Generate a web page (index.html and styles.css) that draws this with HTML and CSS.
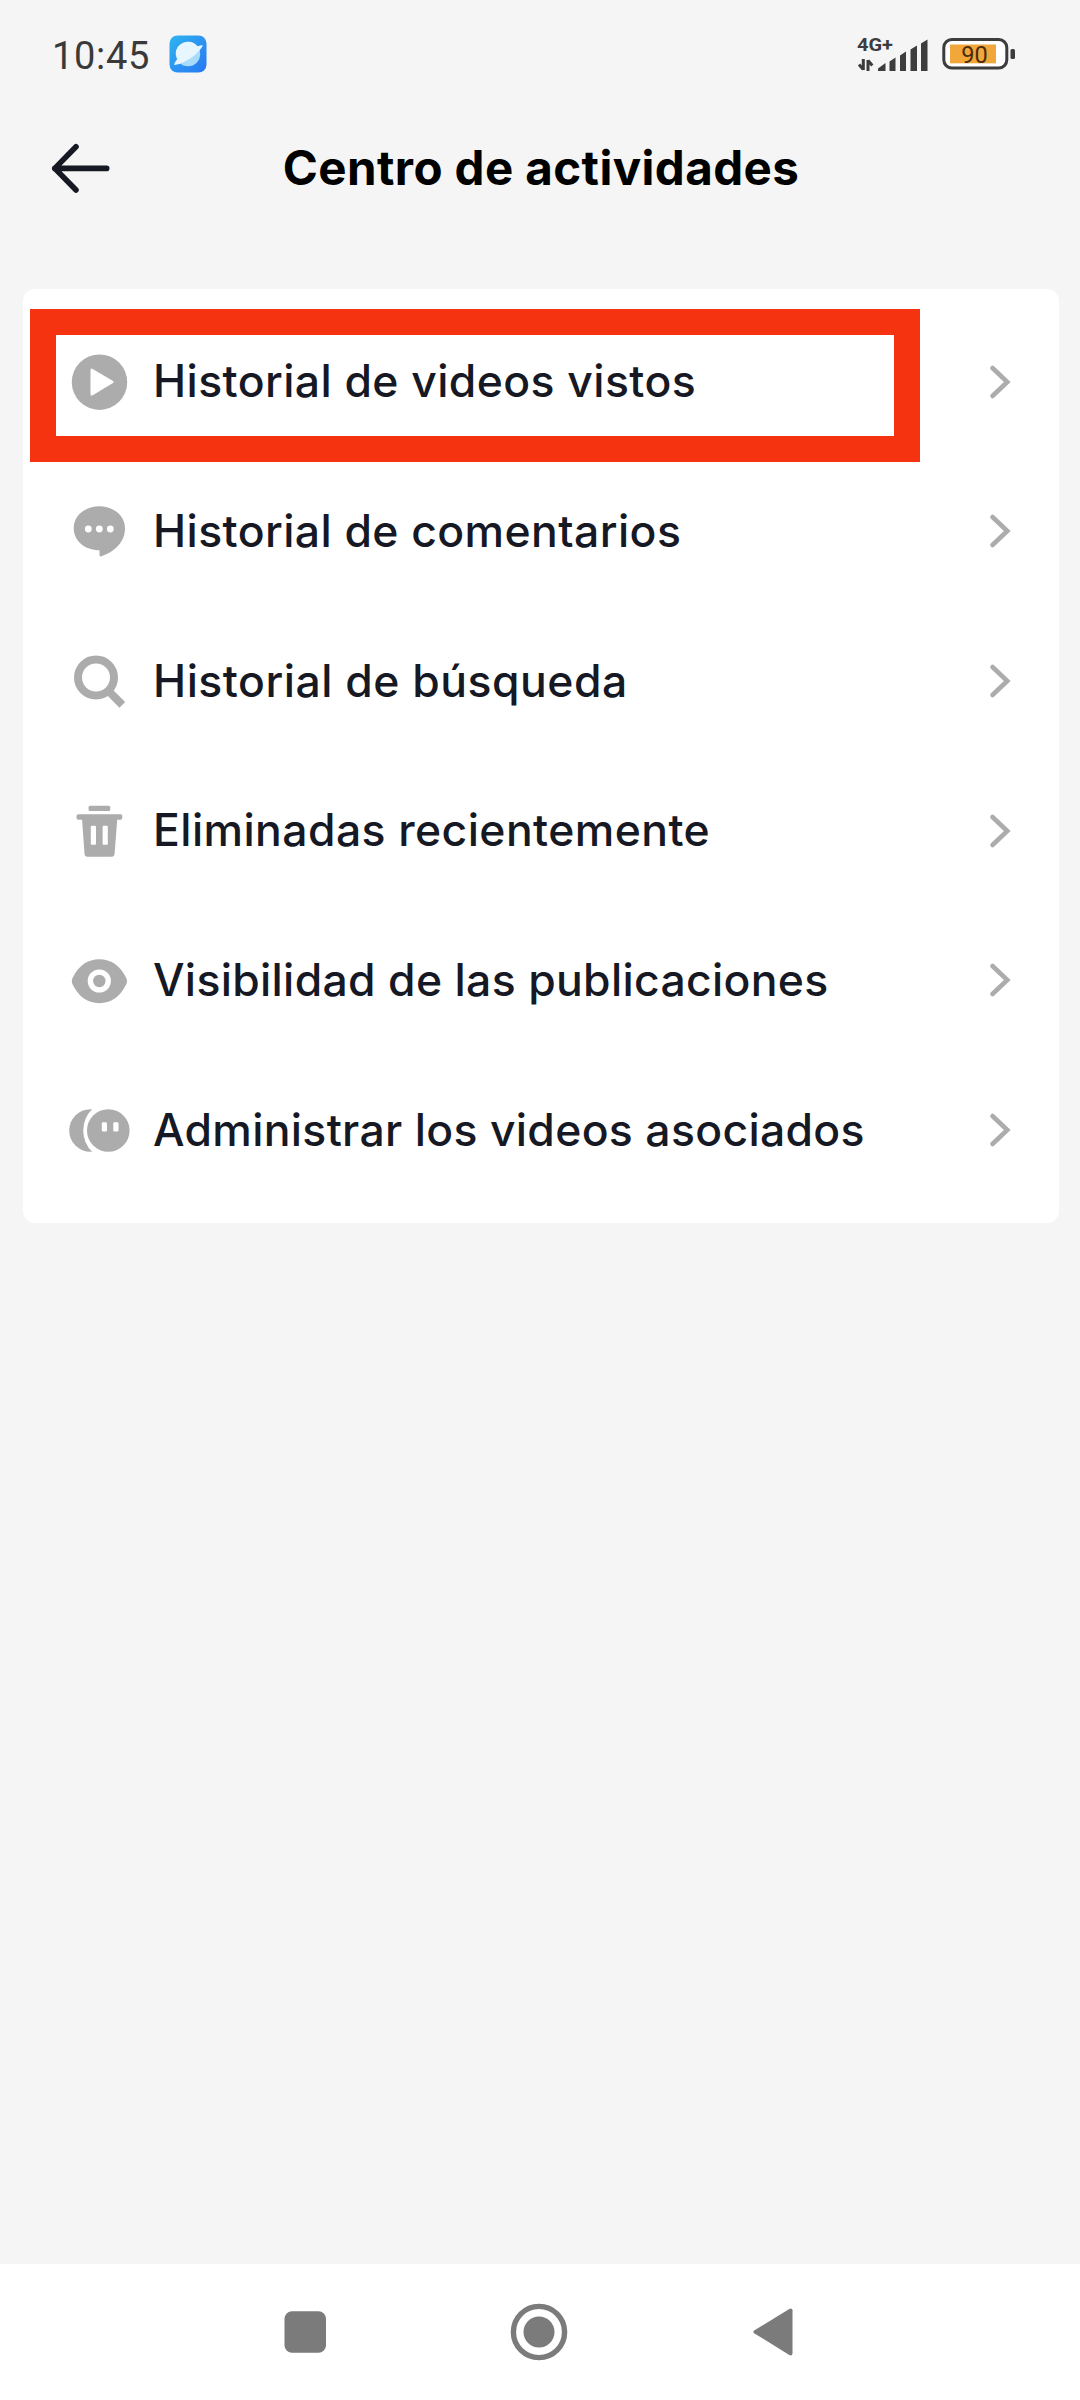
FILE: index.html
```html
<!DOCTYPE html>
<html lang="es">
<head>
<meta charset="utf-8">
<title>Centro de actividades</title>
<link rel="stylesheet" href="styles.css">
</head>
<body>
<div class="screen">
  <div class="status-bar">
    <span class="clock">10:45</span>
    <svg class="app-icon" width="38" height="38" viewBox="0 0 38 38">
      <defs>
        <linearGradient id="sky" x1="0" y1="0" x2="1" y2="1">
          <stop offset="0" stop-color="#2fb4f0"/><stop offset="1" stop-color="#2877f3"/>
        </linearGradient>
      </defs>
      <rect x=".5" y=".5" width="37" height="37" rx="8" fill="url(#sky)"/>
      <circle cx="19" cy="19" r="12.2" fill="#a9dcfb"/>
      <path d="M6.8 19.6a12.2 12.2 0 0 1 21.4-8.4L33.5 10c.5 1.3-1.500 4-4.500 7C23 23.400 12 29.500 5.500 30c-.8-.8.7-3.400 3.300-6.500a12 12 0 0 1-2-3.900Z" fill="#e8f7ff"/>
    </svg>
    <svg class="signal" width="74" height="40" viewBox="0 0 74 40">
      <text class="network" x="0" y="17" textLength="36" lengthAdjust="spacingAndGlyphs">4G+</text>
      <path class="traffic" d="M6.300 25v11M6.300 35.500 2 30.500M11 37V26M11 26.500l4.300 5"/>
      <path class="bars" d="M21 34.500 28.500 29v8H21ZM32.500 27.500l6-4V37h-6ZM43 21.500l6-4V37h-6ZM53.500 15.500l6.500-4V37h-6.500ZM64 9.500l6.500-4V37H64Z"/>
    </svg>
    <svg class="battery" width="75" height="34" viewBox="0 0 75 34">
      <rect x="2.800" y="2.500" width="63" height="28.500" rx="8" fill="#fff" stroke="#3d3d3d" stroke-width="3"/>
      <rect x="9" y="7.500" width="46" height="18.800" fill="#f2a73b"/>
      <rect x="69.500" y="12" width="4.500" height="10" rx="1.500" fill="#3d3d3d"/>
      <text class="charge" x="33.500" y="25.500" text-anchor="middle">90</text>
    </svg>
  </div>

  <header class="header">
    <svg class="back" width="64" height="56" viewBox="0 0 64 56">
      <path d="M30 6.800 8.800 28.400 30 50M8.800 28.400h51.900"/>
    </svg>
    <h1 class="title">Centro de actividades</h1>
  </header>

  <main class="card">
    <div class="row">
      <svg class="icon" viewBox="0 0 64 60">
        <circle cx="31.500" cy="30.200" r="27.700"/>
        <path class="cut" d="M22.500 18.200q0-2.600 2.200-1.300l20.300 12q1.500 1.100 0 2.200l-20.300 12.200q-2.200 1.300-2.200-1.300Z"/>
      </svg>
      <span class="label">Historial de videos vistos</span>
      <svg class="chevron" viewBox="0 0 22 36"><path d="M3.500 4 18.300 18 3.500 32"/></svg>
      <div class="highlight"></div>
    </div>
    <div class="row">
      <svg class="icon" viewBox="0 0 64 60">
        <path d="M31.300 5.300C45.500 5.300 57 14.500 57 27.300c0 14-10.500 23.500-23.500 28q-2 .7-2-1.300V49.300C17 49.300 5.700 40 5.700 27.300S17 5.300 31.300 5.300Z"/>
        <g class="cut"><circle cx="20.300" cy="28" r="3.400"/><circle cx="31.300" cy="28" r="3.400"/><circle cx="42.300" cy="28" r="3.400"/></g>
      </svg>
      <span class="label">Historial de comentarios</span>
      <svg class="chevron" viewBox="0 0 22 36"><path d="M3.500 4 18.300 18 3.500 32"/></svg>
    </div>
    <div class="row">
      <svg class="icon" viewBox="0 0 64 60">
        <g class="line"><circle cx="28" cy="26.500" r="18"/><path d="M39.500 39 54.300 53.800"/></g>
      </svg>
      <span class="label">Historial de búsqueda</span>
      <svg class="chevron" viewBox="0 0 22 36"><path d="M3.500 4 18.300 18 3.500 32"/></svg>
    </div>
    <div class="row">
      <svg class="icon" viewBox="0 0 64 60">
        <rect x="20.600" y="4.800" width="21.600" height="5.200" rx="1.500"/>
        <rect x="8.500" y="13.300" width="45.800" height="5.500" rx="1.800"/>
        <path d="M14 17.500h35.300l-2.700 35.300q-.3 3-3 3H19.500q-2.700 0-3-3Z"/>
        <g class="cut"><rect x="22.800" y="24.800" width="5.200" height="19" rx="1"/><rect x="34.600" y="24.800" width="5.200" height="19" rx="1"/></g>
      </svg>
      <span class="label">Eliminadas recientemente</span>
      <svg class="chevron" viewBox="0 0 22 36"><path d="M3.500 4 18.300 18 3.500 32"/></svg>
    </div>
    <div class="row">
      <svg class="icon" viewBox="0 0 64 60">
        <path d="M31.400 9.300C43 9.300 52 15.500 58 27.500q2 3.700 0 7.300C52 47 43 53.200 31.400 53.200S10.800 47 4.800 34.800q-2-3.600 0-7.300C10.800 15.500 19.800 9.300 31.400 9.300Z"/>
        <circle class="cut" cx="31.300" cy="31" r="11.600"/>
        <circle cx="31.300" cy="31" r="6.200"/>
      </svg>
      <span class="label">Visibilidad de las publicaciones</span>
      <svg class="chevron" viewBox="0 0 22 36"><path d="M3.500 4 18.300 18 3.500 32"/></svg>
    </div>
    <div class="row">
      <svg class="icon" viewBox="0 0 64 60">
        <circle cx="22.500" cy="30.500" r="21.300"/>
        <path class="cut" d="M24.300 9A30 30 0 0 0 24.300 52H60V9Z"/>
        <circle cx="40.300" cy="30.500" r="21.300"/>
        <g class="cut"><rect x="33.800" y="22.300" width="5.200" height="9.200" rx="1.300"/><rect x="45.300" y="22.300" width="5.200" height="9.200" rx="1.300"/></g>
      </svg>
      <span class="label">Administrar los videos asociados</span>
      <svg class="chevron" viewBox="0 0 22 36"><path d="M3.500 4 18.300 18 3.500 32"/></svg>
    </div>
  </main>

  <nav class="nav-bar">
    <svg width="60" height="60" viewBox="0 0 60 60"><rect x="9.500" y="9.300" width="41.500" height="41.500" rx="7.500"/></svg>
    <svg width="60" height="60" viewBox="0 0 60 60">
      <circle cx="30" cy="30" r="25.600" class="ring"/>
      <circle cx="30" cy="30" r="15.500"/>
    </svg>
    <svg width="60" height="60" viewBox="0 0 60 60"><path d="M11.500 28.300 46.300 6.900Q49 5.800 49.500 8.300V51.700q-.5 2.500-3.200 1.400L11.500 31.400q-2.400-1.500 0-3.100Z"/></svg>
  </nav>
</div>
</body>
</html>
```
FILE: styles.css
```css
* { box-sizing: border-box; }
body { margin: 0; background: #f5f5f5; font-family: Inter, "Liberation Sans", sans-serif; }
svg { display: block; flex: none; }

.screen { display: flex; flex-direction: column; width: 1080px; height: 2400px; }

.status-bar { display: flex; align-items: center; height: 110px; padding: 0 64px 0 52px; }
.clock { width: 117px; padding-top: 1px; font: 450 38px/44px Roboto, sans-serif; letter-spacing: .7px; color: #3a3a3a; }
.app-icon { margin-bottom: 3px; }
.signal { margin: 0 10px 2px auto; }
.battery { margin-bottom: 3px; }
.network { font: 700 19px Roboto, sans-serif; fill: #3d3d3d; }
.traffic { fill: none; stroke: #3d3d3d; stroke-width: 3; }
.bars { fill: #3d3d3d; }
.charge { font: 400 23.5px Roboto, sans-serif; fill: #4a2c0c; }

.header { display: grid; grid-template-columns: 64px 1fr 64px; align-items: center; height: 116px; padding: 0 46px; }
.back path { fill: none; stroke: #161823; stroke-width: 5.6px; stroke-linecap: round; stroke-linejoin: round; }
.title { margin: 0 0 1px 2px; text-align: center; font-size: 47.5px; font-weight: 700; line-height: 58px; letter-spacing: .4px; color: #000; white-space: nowrap; }

.card { margin: 63px 21.5px 0 22.5px; padding: 18px 0; height: 934px; display: grid; grid-template-rows: repeat(6, 1fr); background: #fff; border-radius: 12px; }
.row { position: relative; display: flex; align-items: center; padding: 0 48px 0 45.5px; }
.icon { width: 64px; height: 60px; fill: #acacac; }
.icon .cut { fill: #fff; }
.icon .line { fill: none; stroke: #acacac; stroke-width: 8px; }
.label { flex: 1; margin-left: 21px; padding-bottom: 1px; font-size: 44.5px; font-weight: 520; line-height: 54px; letter-spacing: .42px; color: #161823; white-space: nowrap; }
.row:nth-child(3) .label { letter-spacing: .5px; }
.row:nth-child(n+5) .label { letter-spacing: .32px; }
.chevron { width: 22px; height: 36px; }
.chevron path { fill: none; stroke: #acacac; stroke-width: 4.6px; stroke-linecap: round; stroke-linejoin: miter; }
.highlight { position: absolute; left: 7px; top: 1.5px; width: 890px; height: 153px; border: 26px solid #f53310; }

.nav-bar { display: flex; justify-content: center; align-items: center; gap: 174px; height: 136px; margin-top: auto; padding-right: 2px; background: #fff; fill: #7b7b7b; }
.nav-bar .ring { fill: none; stroke: #7b7b7b; stroke-width: 5.4px; }
```
